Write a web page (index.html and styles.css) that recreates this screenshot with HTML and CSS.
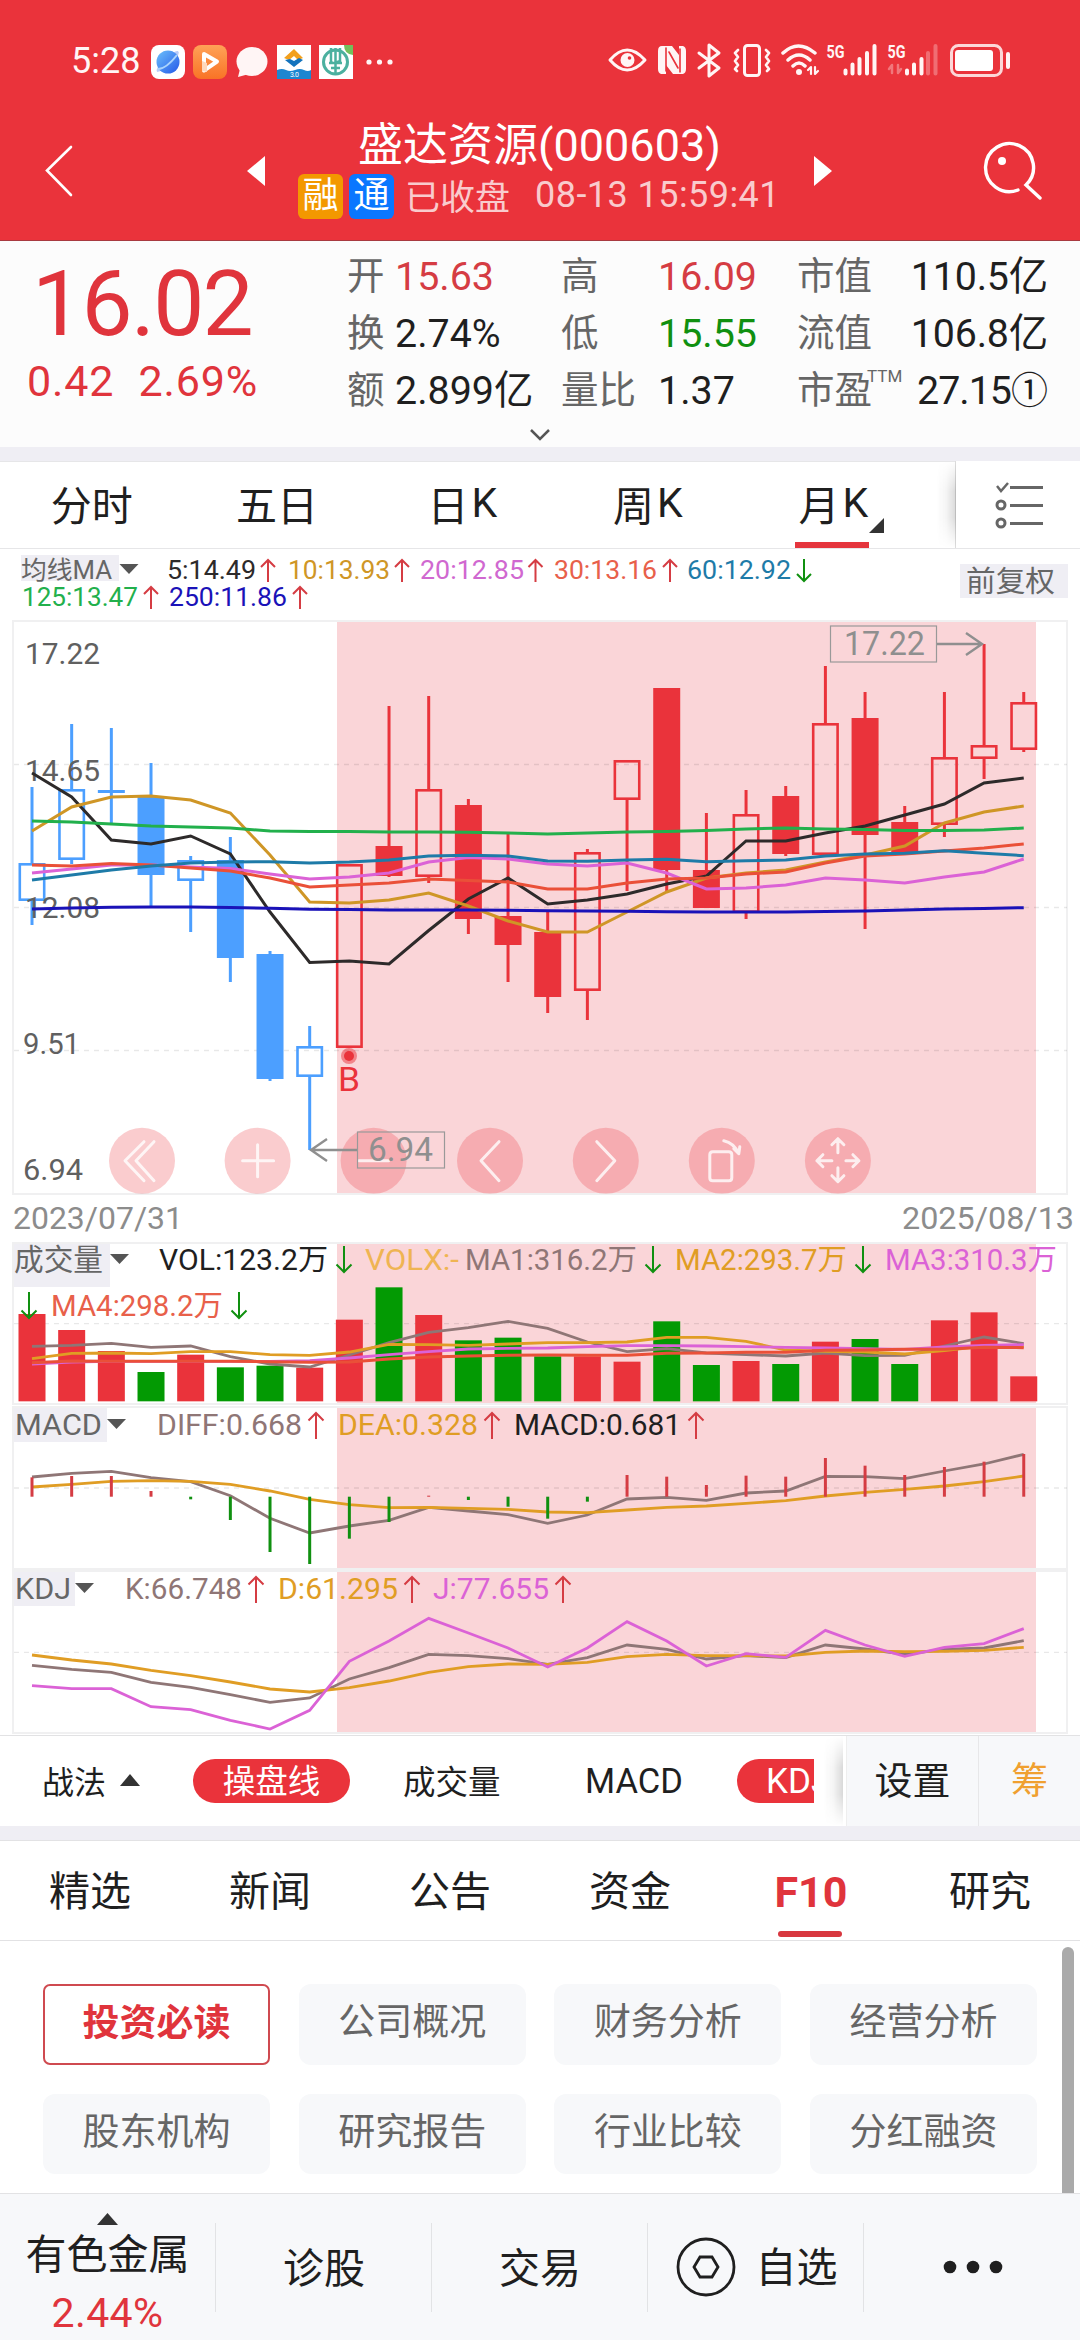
FILE: index.html
```html
<!DOCTYPE html>
<html lang="zh-CN">
<head>
<meta charset="utf-8">
<title>盛达资源(000603)</title>
<link rel="stylesheet" href="styles.css">
</head>
<body>
<main class="app">
  <header class="header">
    <div class="status">
      <span class="clock">5:28</span>
      <svg class="status-apps" viewBox="150 40 246 40" width="246" height="40">
        <defs>
          <linearGradient id="globe" x1="0" y1="0" x2="1" y2="1"><stop offset="0" stop-color="#6cc0fb"/><stop offset="1" stop-color="#2458e8"/></linearGradient>
          <linearGradient id="video" x1="0" y1="0" x2="0" y2="1"><stop offset="0" stop-color="#ffa257"/><stop offset="1" stop-color="#f97326"/></linearGradient>
        </defs>
        <rect x="151" y="44" width="34" height="34" rx="8" fill="#fff"/>
        <path d="M157 71q-2-4 8-13T178 50q3 2-5 11T157 71z" fill="#b9cbf7"/>
        <circle cx="168" cy="61" r="11.500" fill="url(#globe)"/>
        <path d="M158 68q8 0 19-14" fill="none" stroke="#a9d3fc" stroke-width="2"/>
        <rect x="193" y="44" width="34" height="34" rx="8" fill="url(#video)"/>
        <path d="M204 53l13 7.500-13 9z" fill="none" stroke="#fff" stroke-width="4" stroke-linejoin="round"/>
        <path d="M202 60v10l5 1v-9z" fill="#ffd9bd"/>
        <ellipse cx="252" cy="60.500" rx="15.500" ry="14.500" fill="#fff5f5"/>
        <path d="M240 68l-2 8 11-3z" fill="#fff5f5"/>
        <rect x="277" y="44" width="34" height="34" fill="#fff"/>
        <path d="M284 57l10-9 9 9-5 2-4-4-5 4z" fill="#f3a01d"/>
        <path d="M285 59l9 7 9-7-4-2-5 3-4-2z" fill="#1373bd"/>
        <path d="M277 69q5-2 9 0t9 0 9 0 7 0v9h-34z" fill="#1d86d0"/>
        <text x="290" y="76" class="tiny" fill="#fff" textLength="9">3.0</text>
        <rect x="319" y="44" width="34" height="34" fill="#fff"/>
        <path d="M344 44h9v10q-9-1-9-10z" fill="#72bf5b"/>
        <circle cx="335.500" cy="61" r="12" fill="none" stroke="#4bb09f" stroke-width="3"/>
        <path d="M335.500 47v27M331 47v13q0 4 9 0V47M329 62h13M331 67h9" fill="none" stroke="#4bb09f" stroke-width="2.500"/>
        <g fill="#fff5f5"><circle cx="369" cy="61" r="2.600"/><circle cx="379.500" cy="61" r="2.600"/><circle cx="390" cy="61" r="2.600"/></g>
      </svg>
      <svg class="status-system" viewBox="606 42 406 40" width="406" height="40" fill="none" stroke="#fff5f5" stroke-width="3" stroke-linecap="round" stroke-linejoin="round">
        <path d="M610 61q17-20 35 0-18 20-35 0z"/><circle cx="627.500" cy="61" r="7" fill="#fff5f5" stroke="none"/><circle cx="629.500" cy="59" r="1.800" fill="#ea333b" stroke="none"/>
        <path d="M662 47h10l7 9V47h4q3 1 3 5v18q0 4-3 5h-10l-7-9v9h-5q-3-1-3-5V52q0-5 4-5z" fill="#fff5f5" stroke="none"/>
        <path d="M666 49v23M669 53l9 16M680 50v23" stroke="#ea333b" stroke-width="1.600"/>
        <path d="M699 54l20 15-10 8V46l10 8-20 15"/>
        <rect x="744.500" y="46.500" width="15" height="30" rx="3"/>
        <path d="M738 51l-3 3 3 4-3 4 3 4-3 4 2 2M766 51l3 3-3 4 3 4-3 4 3 4-2 2" stroke-width="2.600"/>
        <path d="M783 54q15-14 32 0M788 61q11-10 22 0M793 67q6-6 12 0" stroke-width="3.500"/>
        <circle cx="799" cy="73" r="3" fill="#fff5f5" stroke="none"/>
        <path d="M811 75v-7l-3 3M815 68v7l3-3" stroke-width="2.200"/>
        <path d="M845.500 71.500v3M852.500 65.500v9M859.500 60v14.500M867 54v20.500M874.500 47v27.500" stroke-width="4"/>
        <path d="M907 71.500v3M914 65.500v9M921.500 60v14.500" stroke-width="4"/>
        <path d="M928 54v20.500M935.500 47v27.500" stroke-width="4" stroke-opacity=".3"/>
        <path d="M892 74v-8l-3 4M898 66v8l3-4" stroke-opacity=".35" stroke-width="2.500"/>
        <text class="net" x="826.500" y="59" textLength="18" lengthAdjust="spacingAndGlyphs">5G</text>
        <text class="net" x="887.500" y="59" textLength="18" lengthAdjust="spacingAndGlyphs">5G</text>
        <rect x="951.500" y="46.500" width="50" height="30" rx="7" stroke-opacity=".85"/>
        <rect x="955" y="51" width="38" height="21" rx="3" fill="#fff" stroke="none"/>
        <path d="M1008 55v13" stroke-width="4"/>
      </svg>
    </div>
    <div class="nav">
      <svg class="back" width="30" height="54" viewBox="44 144 30 54"><path d="M71 147L47 170.500 71 195" fill="none" stroke="#fff" stroke-width="2.600" stroke-linecap="round"/></svg>
      <svg width="18" height="30"><path d="M18 0v30L0 15z" fill="#fff"/></svg>
      <div class="title">
        <h1>盛达资源(000603)</h1>
        <div class="subtitle"><b class="badge gold">融</b><b class="badge blue">通</b><span class="closed">已收盘</span><time>08-13 15:59:41</time></div>
      </div>
      <svg width="18" height="30"><path d="M0 0v30l18-15z" fill="#fff"/></svg>
      <svg class="search" width="60" height="62" viewBox="983 141 60 62" fill="none" stroke="#fff" stroke-width="3.400" stroke-linecap="round"><path d="M1018 191a24 24 0 1 1 8-5L1040 199"/><circle cx="1002" cy="162" r="4" fill="#fff" stroke="none"/></svg>
    </div>
  </header>

  <section class="quote">
    <div class="price">
      <strong>16.02</strong>
      <div class="change"><span>0.42</span><span>2.69%</span></div>
    </div>
    <dl class="stats">
      <dt>开</dt><dd class="up">15.63</dd><dt>高</dt><dd class="up">16.09</dd><dt>市值</dt><dd class="right">110.5亿</dd>
      <dt>换</dt><dd>2.74%</dd><dt>低</dt><dd class="down">15.55</dd><dt>流值</dt><dd class="right">106.8亿</dd>
      <dt>额</dt><dd>2.899亿</dd><dt>量比</dt><dd>1.37</dd><dt>市盈<sup>TTM</sup></dt><dd class="right pe">27.15<span>①</span></dd>
    </dl>
    <svg class="expand" width="22" height="14" viewBox="0 0 22 14"><path d="M2 2l9 9 9-9" fill="none" stroke="#555" stroke-width="2.500"/></svg>
  </section>

  <nav class="periods">
    <a>分时</a><a>五日</a><a>日<i>K</i></a><a>周<i>K</i></a><a class="current">月<i>K</i><svg class="corner" width="15" height="15"><path d="M15 0v15H0z" fill="#333"/></svg></a>
    <button class="layers"><svg width="50" height="50" viewBox="994 480 50 50" fill="none" stroke="#666" stroke-width="3"><path d="M996 486l4 5 7-8" stroke-width="2.500"/><circle cx="1000" cy="505" r="4"/><circle cx="1000" cy="523" r="4"/><path d="M1009 487.500h33M1009 505.500h33M1009 523.500h33"/></svg></button>
  </nav>

  <section class="charts">
    <svg class="chart" id="kline" viewBox="0 549 1080 693" width="1080" height="693"></svg>
    <svg class="chart" id="volume" viewBox="0 1242 1080 164" width="1080" height="164"></svg>
    <svg class="chart" id="macd" viewBox="0 1406 1080 164" width="1080" height="164"></svg>
    <svg class="chart" id="kdj" viewBox="0 1570 1080 165" width="1080" height="165"></svg>
  </section>

  <section class="indicators">
    <div class="indicator-list">
      <span class="tactic">战法<svg width="20" height="12"><path d="M10 0l10 12H0z" fill="#333"/></svg></span>
      <span class="pill">操盘线</span>
      <span class="vol">成交量</span>
      <span class="macd">MACD</span>
      <span class="pill cut">KDJ</span>
    </div>
    <span class="settings">设置</span>
    <span class="chips">筹</span>
  </section>

  <nav class="sections">
    <a>精选</a><a>新闻</a><a>公告</a><a>资金</a><a class="current">F10</a><a>研究</a>
  </nav>

  <section class="topics">
    <a class="selected">投资必读</a><a>公司概况</a><a>财务分析</a><a>经营分析</a>
    <a>股东机构</a><a>研究报告</a><a>行业比较</a><a>分红融资</a>
    <div class="scrollbar"></div>
  </section>

  <footer class="toolbar">
    <div class="sector"><svg width="21" height="12"><path d="M10.500 0L21 12H0z" fill="#333"/></svg><span>有色金属</span><em>2.44%</em></div>
    <div>诊股</div>
    <div>交易</div>
    <div class="watch"><svg width="60" height="60" viewBox="0 0 60 60" fill="none" stroke="#1f1f1f" stroke-width="2.800"><circle cx="30" cy="30" r="28"/><path d="M24 20h12l6 10-6 10H24l-6-10z"/></svg><span>自选</span></div>
    <div class="more"><svg width="60" height="14"><g fill="#1f1f1f"><circle cx="7" cy="7" r="6.300"/><circle cx="30" cy="7" r="6.300"/><circle cx="53" cy="7" r="6.300"/></g></svg></div>
  </footer>
</main>
<script src="charts.js"></script>
</body>
</html>
```
FILE: styles.css
```css
* { box-sizing: border-box; }
body { margin: 0; background: #fff; color: #1f1f1f; font-family: Roboto, "Noto Sans CJK SC", sans-serif; }
svg { display: block; flex: none; }
h1, dl, dd, dt { margin: 0; font-weight: 400; }
i, em { font-style: normal; }
.app { width: 1080px; height: 2340px; overflow: hidden; display: flex; flex-direction: column; }
.app > * { flex: none; }

.header { height: 241px; background: #ea333b; border-bottom: 1px solid #a83a40; color: #fff; }
.status { height: 102px; padding: 20px 68px 0 71px; display: flex; align-items: center; }
.clock { width: 79px; font-size: 36px; color: #fff5f5; }
.status-apps { margin-right: auto; }
.tiny { font-size: 7px; }
.net { font-size: 18px; font-weight: 700; fill: #fff5f5; stroke: none; }
.nav { height: 138px; display: grid; grid-template-columns: 247px 18px 549px 18px 1fr; align-items: center; }
.back { margin-left: 44px; }
.search { margin-left: 151px; }
.title { text-align: center; }
.title h1 { font-size: 45px; line-height: 51px; height: 51px; white-space: nowrap; }
.subtitle { height: 51px; padding-left: 33px; display: flex; align-items: center; font-size: 35px; color: #f9cbcd; white-space: nowrap; }
.badge { width: 45px; height: 45px; margin-right: 6px; border-radius: 6px; font-weight: 400; font-size: 36px; line-height: 44px; color: #fff; }
.gold { background: #f39800; }
.blue { background: #0a77ff; }
.closed { margin: -5px 0 0 5px; }
.subtitle time { margin: -3px 0 0 25px; font-size: 36px; letter-spacing: .45px; }

.quote { height: 206px; background: #fcfcfc; display: grid; grid-template-columns: 347px 1fr; grid-template-rows: 187px 19px; }
.price { padding-left: 27px; color: #e0343c; }
.price strong { display: block; margin: 12px 0 0 5px; font-weight: 400; font-size: 91px; line-height: 103px; height: 103px; letter-spacing: -1.7px; }
.change { display: flex; gap: 24px; font-size: 43px; line-height: 50px; letter-spacing: .9px; }
.stats { padding-top: 7px; display: grid; grid-template-columns: 48px 166px 97px 139px 112px 139px; grid-template-rows: repeat(3, 57px); font-size: 39.400px; line-height: 57px; white-space: nowrap; }
.stats dt { color: #666; font-size: 37.500px; position: relative; }
.stats sup { position: absolute; left: 70px; top: 5px; font-size: 17px; line-height: 18px; }
.stats .up { color: #d53c43; }
.stats .down { color: #109010; }
.stats .right { text-align: right; letter-spacing: -.2px; }
.stats .pe { letter-spacing: -1px; }
.pe span { font-size: 37px; letter-spacing: 0; }
.expand { grid-column: 1 / 3; justify-self: center; }

.periods { height: 102px; border-top: 14px solid #efeef4; border-bottom: 1px solid #e6e6e8; display: flex; position: relative; box-shadow: inset 0 1px #e6e6e8; }
.periods a { width: 185.400px; padding: 0 2px 3px 0; display: flex; align-items: center; justify-content: center; position: relative; font-size: 41px; }
.periods i { margin-left: 3px; }
.periods .current::after { content: ""; position: absolute; left: 53px; bottom: 0; width: 74px; height: 6px; background: #e5353d; }
.corner { position: absolute; left: 127px; top: 57px; }
.layers { width: 125px; margin-left: auto; padding: 0 0 0 39px; border: 0; background: #fff; border-left: 1px solid #ddd; position: relative; }
.layers::before, .indicator-list::after { content: ""; position: absolute; right: 100%; top: 0; bottom: 0; width: 20px; background: linear-gradient(to left, rgba(0,0,0,.15), rgba(0,0,0,.04) 50%, rgba(0,0,0,0)); -webkit-mask: linear-gradient(transparent, #000 35%, #000 65%, transparent); mask: linear-gradient(transparent, #000 35%, #000 65%, transparent); }

.chart { font-size: 29px; }

.indicators { height: 91px; border-top: 1px solid #e2e2e4; display: flex; align-items: stretch; }
.indicator-list { width: 843px; padding-left: 42px; display: flex; align-items: center; position: relative; font-size: 32.500px; white-space: nowrap; }
.indicator-list::after { right: 0; }
.tactic { width: 151px; padding-bottom: 2px; display: flex; align-items: center; gap: 14px; font-size: 32px; }
.pill { width: 157px; height: 44px; border-radius: 22px; background: #ea333b; color: #fff; text-align: center; line-height: 46px; }
.vol { margin-left: 53px; width: 182px; padding-bottom: 3px; }
.macd { width: 152px; padding-bottom: 1px; font-size: 34.500px; }
.cut { width: 77px; padding-left: 29px; border-radius: 22px 0 0 22px; text-align: left; overflow: hidden; font-size: 35px; }
.settings { width: 132px; margin-left: 3px; border-left: 1px solid #eee; background: #f7f8fa; text-align: center; font-size: 38px; line-height: 91px; }
.chips { flex: 1; border-left: 1px solid #e7e7e9; background: #f7f8fa; color: #f0a030; text-align: center; font-size: 37px; line-height: 91px; }

.sections { height: 115px; border-top: 14px solid #efeef4; border-bottom: 1px solid #e2e2e4; display: grid; grid-template-columns: repeat(6, 180px); box-shadow: inset 0 1px #e2e2e4; }
.sections a { text-align: center; font-size: 41px; line-height: 104px; height: 100px; position: relative; }
.sections .current { color: #e0343c; font-weight: 700; font-size: 43px; padding-left: 2px; }
.sections .current::after { content: ""; position: absolute; left: 58px; bottom: 3px; width: 64px; height: 6px; border-radius: 3px; background: #d8383f; }

.topics { height: 252px; padding: 43px 43px 19px; display: grid; grid-template-columns: repeat(4, 227px); grid-template-rows: 81px 80px; gap: 29px 28.700px; position: relative; overflow: hidden; }
.topics a { border-radius: 12px; background: #f7f8fa; color: #666; text-align: center; font-size: 37px; line-height: 78px; }
.topics .selected { background: #fff; border: 2px solid #cf4a50; border-radius: 7px; color: #e0343c; font-weight: 700; line-height: 76px; }
.scrollbar { position: absolute; left: 1062px; top: 6px; width: 12px; height: 260px; border-radius: 6px; background: #aaa; }

.toolbar { height: 148px; border-top: 1px solid #e2e2e4; background: #f7f8fa; display: grid; grid-template-columns: repeat(5, 216px); font-size: 41px; }
.toolbar > div { height: 148px; padding-bottom: 6px; display: flex; align-items: center; justify-content: center; background: linear-gradient(#e2e3e5, #e2e3e5) right 29px / 1px 89px no-repeat; }
.toolbar > .more { padding: 0 0 2px 2px; background: none; }
.toolbar > .sector { flex-direction: column; justify-content: flex-start; padding: 19px 1px 0 0; }
.sector span { line-height: 60px; height: 58px; }
.sector em { line-height: 60px; color: #e0343c; letter-spacing: .4px; }
.toolbar > .watch { gap: 20px; padding: 0 0 3px 1px; }
.watch span { margin-top: -6px; }
```
FILE: charts.js
```js
// Panels share one page-wide coordinate system; each svg's viewBox picks its own slice.
const RED = '#ea333b', GREEN = '#039a03', BLUE = '#4c9fff';
const GREY = '#666', BROWN = '#8f7676', GOLD = '#e09d24', PINK = '#db62d6', TOMATO = '#ea5038';
const xAt = i => 32 + i * 39.67;

const rect = (x, y, w, h, fill, extra = '') => `<rect x="${x}" y="${y}" width="${w}" height="${h}" fill="${fill}" ${extra}/>`;
const stroke = (d, color, w = 3) => `<path d="${d}" fill="none" stroke="${color}" stroke-width="${w}"/>`;
const text = (s, x, y, w, color, size = 29) =>
  `<text x="${x - 2}" y="${y}" textLength="${w + 3}" lengthAdjust="spacingAndGlyphs" fill="${color}" font-size="${size}">${s}</text>`;
const line = (points, color, w = 3) => stroke('M' + points.map(p => p.join(' ')).join('L'), color, w);
const series = (ys, color, base, w) => line(ys.map((y, i) => [xAt(i), base + y / 3]), color, w);
const caret = (x, y) => `<path d="M${x} ${y}h19l-9.500 10z" fill="#555"/>`;
const arrow = (x, y, up, h = 27, half = 7.5) => up
  ? stroke(`M${x} ${y + h}V${y + 1}M${x - half} ${y + half + 1}L${x} ${y + 1}l${half} ${half}`, '#d53c43', 2)
  : stroke(`M${x} ${y}V${y + h - 1}M${x - half} ${y + h - half - 1}L${x} ${y + h - 1}l${half} ${-half}`, '#109010', 2);
const frame = (y, h, dashes) =>
  `<rect x="13" y="${y}" width="1054" height="${h}" fill="none" stroke="#f0f0f1" stroke-width="2"/>` +
  rect(337, y + 1, 699, h - 2, '#fad5d8') +
  dashes.map(d => `<path d="M14 ${d}H1067" stroke="#000" stroke-opacity=".09" stroke-width="1.300" stroke-dasharray="5 5"/>`).join('');

// type: o = hollow, f = filled; then high, top, bottom, low
const candles = [
  ['o',787,863,901,925],['o',724,789,860,864],['o',728,790,793,823],['f',763,797,875,907],['o',856,860,881,932],
  ['f',837,860,958,982],['f',951,954,1079,1081],['o',1026,1046,1077,1150],['o',864,864,1048,1048],['f',706,846,876,877],
  ['o',696,789,877,883],['f',799,805,919,934],['f',834,916,945,982],['f',911,932,997,1013],['o',849,852,991,1020],
  ['o',760,760,800,891],['f',688,688,870,891],['f',813,870,908,908],['o',790,814,913,919],['f',786,796,854,856],
  ['o',666,723,855,855],['f',692,718,835,929],['f',806,822,852,852],['o',692,757,825,837],['o',644,745,759,779],['o',692,702,750,752]
];
const drawCandle = ([type, hi, top, bottom, lo], i) => {
  const x = xAt(i), color = i < 8 ? BLUE : RED;
  const wicks = stroke(`M${x} ${hi}V${top}M${x} ${bottom}V${lo}`, color, 3);
  if (bottom - top < 4) return stroke(`M${x - 13.5} 791.500h27`, color, 3) + wicks;
  return wicks + (type === 'f'
    ? rect(x - 13.5, top, 27, bottom - top, color)
    : rect(x - 12.2, top + 1.3, 24.4, bottom - top - 2.6, 'none', `stroke="${color}" stroke-width="2.600"`));
};

const averages = [
  ['#2d2a2a', [773,797,840,844,836,854,912,962.5,961,964,930.5,899,878,904,900,894,884,876,841,841,833,826,815,804,783,778]],
  ['#cf9626', [831,807,797,796,800,813,855,902,903,900,893,906,921,932,932,912,892,878,873,870,862,855,846,823,812,806]],
  ['#22b04c', [821,822,824,826,827,828,831,831.5,831.5,832,832,832.3,833,834,833,832,831.5,830.5,829,828,829,829.5,830.5,830.5,830,828]],
  [PINK, [873,869,865,865,867,868.5,874,879,877,873,862,857.5,859,864,866,863,873,889,888,885,878,880,883,877,872,859]],
  [TOMATO, [865,866,863.5,865,868,871,878,887,885,883,879,880.5,882,889,889,883,879,878,874,872,863,856,854,851,848,844]],
  ['#1e7ba8', [880,875,870,866,863,862,861.7,863,862,860,856,855.3,856,861,861.3,860,859.3,861.7,860.7,860,856,854,853.3,850.7,853.3,855.7]],
  ['#1a12b8', [909,908,907.3,907,907,907.5,908.3,909.3,909.5,910,910,910,910.3,910.7,911,911.3,911.7,912,912,912,911.5,911,910,909,908.5,907.7]]
];

const button = (x, d) => `<circle cx="${x}" cy="1160.700" r="33" fill="${RED}" fill-opacity=".25"/>` +
  `<path transform="translate(${x} 1160.700)" d="${d}" fill="none" stroke="#fff" stroke-opacity=".8" stroke-width="3" stroke-linecap="round" stroke-linejoin="round"/>`;

const maLegend = [
  ['5:14.49',169,579,86,'#2d2a2a',268,1],['10:13.93',290,579,99,'#cf9626',402,1],['20:12.85',422,579,101,'#d068d0',535.5,1],
  ['30:13.16',556,579,100,'#e8604a',670,1],['60:12.92',689,579,101,'#1e7ba8',804,0],
  ['125:13.47',24,606,113,'#22b04c',151,1],['250:11.86',171,606,115,'#1a12b8',300,1]
].map(([s,x,y,w,c,ax,up]) => text(s, x, y, w, c, 26) + arrow(ax, y - 20, up, 23, 7)).join('');

document.getElementById('kline').innerHTML =
  rect(21, 555, 98, 26, '#efeef4') + text('均线MA', 23, 578.5, 88, GREY, 25) + caret(119.5, 564) + maLegend +
  rect(960, 564, 108, 34, '#efeef4') + text('前复权', 968, 592, 86, GREY, 29) +
  frame(621, 573, [764.5, 907.5, 1050.5]) +
  candles.map(drawCandle).join('') +
  [['17.22',27,664,72],['14.65',27,780.5,72],['12.08',27,917.5,72],['9.51',25,1053.5,54],['6.94',25,1179.5,57]].map(a => text(...a, '#606060')).join('') +
  averages.map(([c, ys]) => line(ys.map((y, i) => [xAt(i), y]), c)).join('') +
  '<rect x="830.500" y="626" width="106" height="36" fill="none" stroke="#999" stroke-width="1.200"/>' +
  text('17.22', 846, 655, 78, '#8f8f8f', 32.5) + stroke('M937 644h44M966 633l16 11-16 11', '#8f8f8f', 2.4) +
  `<circle cx="349" cy="1056" r="8" fill="${RED}" fill-opacity=".5"/><circle cx="349" cy="1056" r="5" fill="${RED}"/>` +
  text('B', 340, 1091, 19, RED, 34) +
  button(142, 'M2-19L-17 0 2 20M12-19L-6 0 12 20') + button(257.6, 'M-15 0H16M0-16V16') + button(373.6, 'M-15 0H15') +
  button(490, 'M9-19L-9 0 9 20') + button(605.8, 'M-9-19L9 0-9 20') +
  button(721.8, 'M-9-9H7q3 0 3 3V17q0 3-3 3H-9q-3 0-3-3V-6q0-3 3-3zM2-20Q12-18 17-7L18-14M17-7L12-12') +
  button(837.9, 'M0-8V-22M-6-16L0-22 6-16M0 7V20M-6 15L0 21 6 15M-6 0H-21M-15-6L-21 0-15 6M8 0H21M15-6L21 0 15 6') +
  '<rect x="357.500" y="1132" width="87" height="36" fill="none" stroke="#999" stroke-width="1.200"/>' +
  text('6.94', 370, 1161, 62, '#8f8f8f', 32.5) + stroke('M357 1150h-44M327 1139l-16 11 16 11', '#8f8f8f', 2.4) +
  text('2023/07/31', 15, 1229, 167, '#8c8c8c', 31.5) + text('2025/08/13', 904, 1229, 169, '#8c8c8c', 31.5);

const volumes = [252,300,363,426,374,412,407,413,269,172,255,331,323,379,379,395,274,405,393,402,335,327,402,271,247,439];
const rising = '11101001101000110010100111';
document.getElementById('volume').innerHTML =
  frame(1243, 161, [1323.7]) + rect(14, 1244, 96, 43, '#efeef4') +
  volumes.map((v, i) => rect(xAt(i) - 13.5, 1230 + v / 3, 27, (514 - v) / 3, rising[i] === '1' ? RED : GREEN)).join('') +
  series([349,346,340,352,348,380,402,411,375,338,307,293,274,295,336,365,356,369,374,378,369,377,376,348,321,341], BROWN, 1230, 2.8) +
  series([386,370,369,371,365,365,374,376,366,343,344,346,342,338,338,336,322,322,334,360,364,366,372,362,348,350], GOLD, 1230, 2.8) +
  series([402,396,394,394,394,394,394,392,384,374,365,357,355,354,350,347,347,348,350,352,354,356,358,351,346,344], PINK, 1230, 2.8) +
  series([398,393,394,394,394,394,395,397,396,387,381,378,376,375,376,376,370,369,367,367,361,360,358,358,352,353], TOMATO, 1230, 3) +
  text('成交量', 16, 1270, 86, GREY, 30) + caret(110, 1254) +
  text('VOL:123.2万', 161, 1270, 166, '#1f1f1f') + arrow(344, 1246, 0) + text('VOLX:-', 367, 1270, 91, '#efb452') +
  text('MA1:316.2万', 467, 1270, 169, BROWN) + arrow(653, 1246, 0) + text('MA2:293.7万', 677, 1270, 169, GOLD) + arrow(863, 1246, 0) +
  text('MA3:310.3万', 887, 1270, 169, PINK) + arrow(29, 1292, 0) + text('MA4:298.2万', 53, 1316, 169, '#e8604a') + arrow(239, 1292, 0);

const macdBars = [742,738,738,783,808,870,966,1002,926,876,797,810,830,866,815,735,740,765,737,740,684,707,735,711,695,672];
document.getElementById('macd').innerHTML =
  frame(1407, 162, [1488]) + rect(14, 1408, 93, 34, '#efeef4') +
  series([741,730,724,743,755,797,865,909,888,871,832,843,854,880,855,807,802,811,789,783,739,740,746,723,702,673], BROWN, 1230, 2.8) +
  series([771,763,754,752,754,763,783,808,824,833,832,835,838,846,848,840,832,828,820,812,798,787,778,768,755,738], GOLD, 1230, 2.8) +
  macdBars.map((v, i) => stroke(`M${xAt(i)} 1496.700V${1230 + v / 3}`, v < 800 ? '#d53c43' : '#109010', 3)).join('') +
  text('MACD', 17, 1435, 84, GREY) + caret(107, 1419) +
  text('DIFF:0.668', 159, 1435, 142, BROWN) + arrow(316, 1412, 1) + text('DEA:0.328', 340, 1435, 137, GOLD) + arrow(492, 1412, 1) +
  text('MACD:0.681', 516, 1435, 164, '#1f1f1f') + arrow(696, 1412, 1);

document.getElementById('kdj').innerHTML =
  frame(1571, 162, [1652.3]) + rect(14, 1572, 61, 34, '#efeef4') +
  series([316,328,337,367,382,404,427,414,357,323,283,287,296,313,293,255,268,297,287,293,255,267,283,268,264,242], BROWN, 1560, 2.8) +
  series([285,300,312,331,347,366,387,396,383,363,337,320,312,313,307,290,283,287,287,288,277,273,275,274,271,262], GOLD, 1560, 2.8) +
  series([377,386,386,440,449,481,507,451,304,243,175,219,264,321,264,185,243,318,281,292,211,255,289,262,251,206], PINK, 1560, 2.8) +
  text('KDJ', 17, 1599, 53, GREY) + caret(75, 1583) +
  text('K:66.748', 127, 1599, 114, BROWN) + arrow(256, 1576, 1) + text('D:61.295', 280, 1599, 117, GOLD) + arrow(412, 1576, 1) +
  text('J:77.655', 435, 1599, 113, PINK) + arrow(563, 1576, 1);
```
